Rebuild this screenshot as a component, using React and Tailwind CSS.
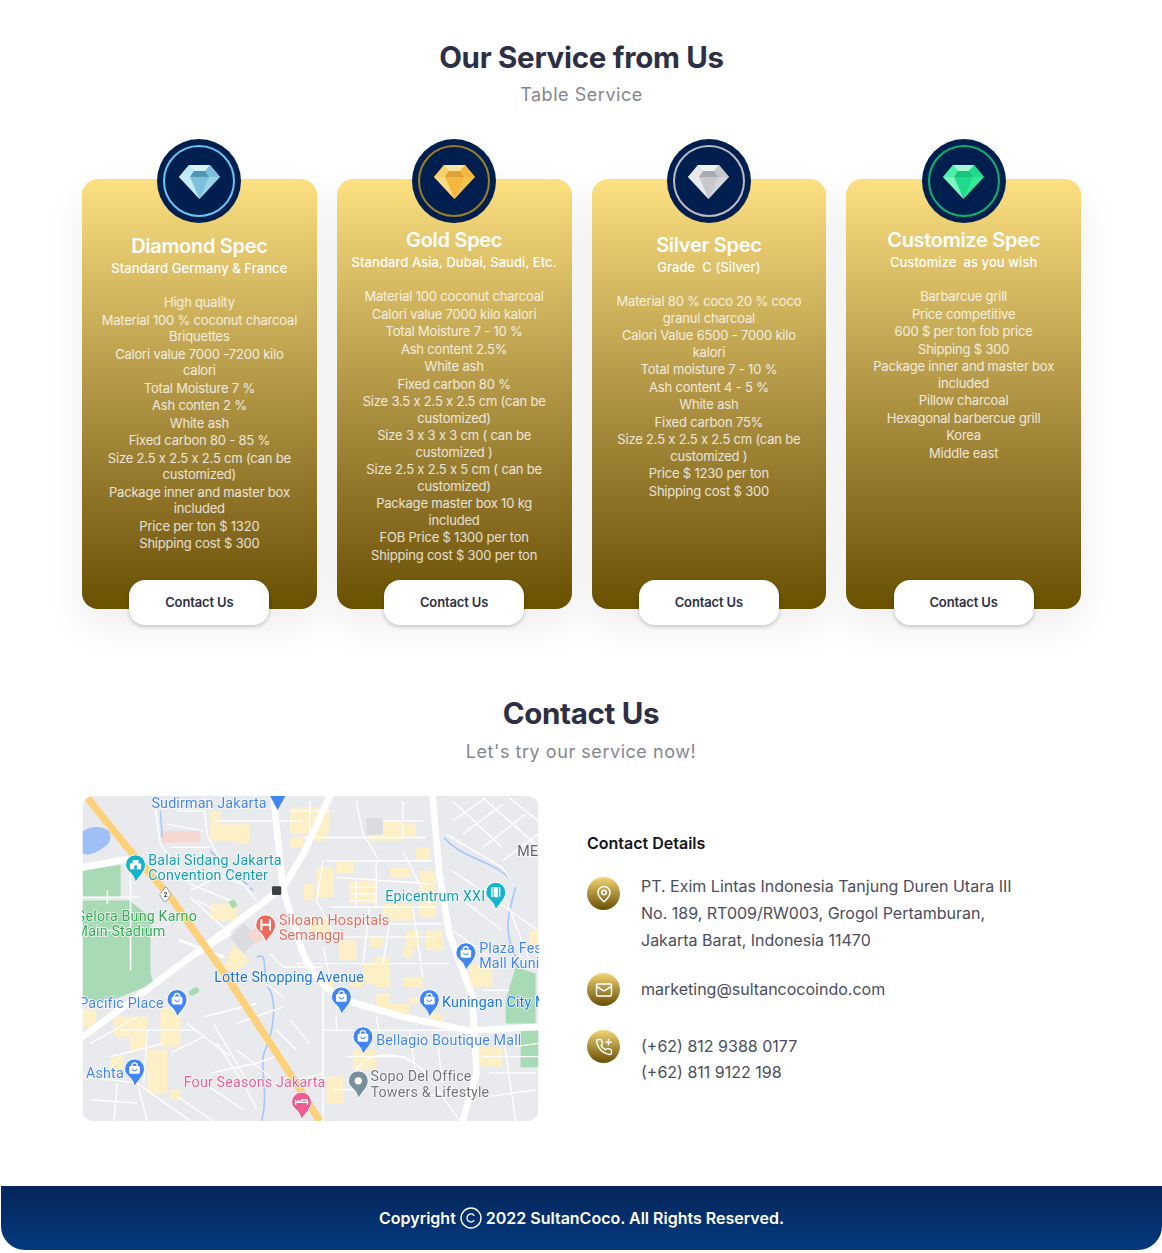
import { MapPin, Mail, Copyright } from "lucide-react"

const sans = "font-['Inter','Liberation_Sans',sans-serif]"

const specs = [
  {
    title: "Diamond Spec",
    sub: "Standard Germany & France",
    top: "pt-[10px]",
    ring: "border-[#6cc4f0]",
    gem: ["#bfe9f7", "#7cc0dc", "#4f97b3", "#9ad6ea", "#d8f3fb"],
    items: [
      "High quality",
      "Material 100 % coconut charcoal Briquettes",
      "Calori value 7000 -7200 kilo calori",
      "Total Moisture 7 %",
      "Ash conten 2 %",
      "White ash",
      "Fixed carbon 80 - 85 %",
      "Size 2.5 x 2.5 x 2.5 cm (can be customized)",
      "Package inner and master box included",
      "Price per ton $ 1320",
      "Shipping cost $ 300",
    ],
  },
  {
    title: "Gold Spec",
    sub: "Standard Asia, Dubai, Saudi, Etc.",
    top: "pt-[4px]",
    ring: "border-[#9a7f2a]",
    gem: ["#fbd06a", "#f4b740", "#dfa03a", "#f8c24f", "#fde3a0"],
    items: [
      "Material 100 coconut charcoal",
      "Calori value 7000 kilo kalori",
      "Total Moisture 7 - 10 %",
      "Ash content 2.5%",
      "White ash",
      "Fixed carbon 80 %",
      "Size 3.5 x 2.5 x 2.5 cm (can be customized)",
      "Size 3 x 3 x 3 cm ( can be customized )",
      "Size 2.5 x 2.5 x 5 cm ( can be customized)",
      "Package master box 10 kg included",
      "FOB Price $ 1300 per ton",
      "Shipping cost $ 300 per ton",
    ],
  },
  {
    title: "Silver Spec",
    sub: "Grade  C (Silver)",
    top: "pt-[9px]",
    ring: "border-[#b9bdc6]",
    gem: ["#e6e7ea", "#c6c8cd", "#a9abb2", "#d4d5d9", "#f2f3f4"],
    items: [
      "Material 80 % coco 20 % coco granul charcoal",
      "Calori Value 6500 - 7000 kilo kalori",
      "Total moisture 7 - 10 %",
      "Ash content 4 - 5 %",
      "White ash",
      "Fixed carbon 75%",
      "Size 2.5 x 2.5 x 2.5 cm (can be customized )",
      "Price $ 1230 per ton",
      "Shipping cost $ 300",
    ],
  },
  {
    title: "Customize Spec",
    sub: "Customize  as you wish",
    top: "pt-[4px]",
    ring: "border-[#10b06f]",
    gem: ["#4cf0a8", "#1fdc8c", "#16c47a", "#36e89b", "#a4f8d2"],
    items: [
      "Barbarcue grill",
      "Price competitive",
      "600 $ per ton fob price",
      "Shipping $ 300",
      "Package inner and master box included",
      "Pillow charcoal",
      "Hexagonal barbercue grill",
      "Korea",
      "Middle east",
    ],
  },
]

function Gem({ colors }) {
  const [top, mid, deep, side, shine] = colors
  return (
    <svg width="41" height="35" viewBox="0 0 41 35" className="blur-[0.4px]">
      <path d="M10 1h21l10 12-20.500 22L0 13z" fill={side} />
      <path d="M10 1h21l-5 6H15z" fill={shine} />
      <path d="M10 1l5 6-4 6H0z" fill={top} />
      <path d="M31 1l-5 6 4 6h11z" fill={mid} />
      <path d="M15 7h11l4 6H11z" fill={deep} />
      <path d="M11 13h19l-9.500 22z" fill={mid} />
      <path d="M0 13h11l9.500 22z" fill={shine} opacity="0.7" />
    </svg>
  )
}

function SpecCard({ spec }) {
  return (
    <div className="flex h-[430px] flex-col items-center rounded-[16px] bg-gradient-to-b from-[#fde081] to-[#6a5000] shadow-[0_16px_40px_rgba(0,0,0,0.07)]">
      <div className="-mt-10 flex h-[84px] w-[84px] shrink-0 items-center justify-center rounded-full bg-[#001f4e]">
        <div className={`flex h-[72px] w-[72px] items-center justify-center rounded-full border-2 ${spec.ring}`}>
          <Gem colors={spec.gem} />
        </div>
      </div>
      <div className={`w-full px-4 text-center text-white ${spec.top}`}>
        <h3 className="text-[20px] leading-[26px] font-semibold tracking-[-0.015em]">{spec.title}</h3>
        <p className="-mx-2 mt-[1px] text-[13px] leading-[17px] font-medium tracking-[0.005em] whitespace-pre-wrap">{spec.sub}</p>
        <div className="mt-[17px] text-[13px] leading-[16.500px] tracking-[-0.015em] text-white/80">
          {spec.items.map((item) => (
            <p key={item} className="mb-[1px]">{item}</p>
          ))}
        </div>
      </div>
      <button className="mt-auto -mb-4 h-[45px] w-[140px] shrink-0 rounded-[16px] bg-white text-[13px] font-semibold tracking-[-0.01em] text-[#2f2f45] shadow-[0_2px_4px_rgba(0,0,0,0.2)]">
        Contact Us
      </button>
    </div>
  )
}

// x/y of every map item are in 3x pixels of the map crop
const yellowBlocks = [
  [420, 100, 120, 50], [660, 50, 120, 80], [740, 230, 50, 90], [720, 100, 50, 50],
  [900, 90, 100, 60], [1050, 240, 50, 140], [1070, 420, 50, 60], [810, 450, 50, 60], [910, 500, 50, 90],
  [1000, 560, 60, 30], [1200, 520, 70, 70], [270, 650, 60, 120], [130, 680, 100, 60], [230, 780, 60, 130],
  [36, 660, 40, 50], [920, 610, 40, 60], [960, 640, 60, 40], [850, 780, 70, 60], [1230, 770, 70, 60],
  [770, 860, 50, 80], [420, 340, 80, 50], [700, 280, 30, 50], [1080, 670, 40, 30], [980, 100, 60, 40],
  [940, 340, 90, 50], [720, 380, 60, 60], [1010, 420, 40, 50], [180, 740, 50, 40], [880, 520, 30, 60],
  [840, 270, 80, 70], [800, 210, 50, 40], [960, 230, 60, 30], [660, 140, 40, 30], [1040, 170, 40, 40],
  [500, 130, 40, 30], [900, 440, 40, 30], [760, 560, 30, 40], [1020, 620, 40, 20], [120, 800, 40, 40],
  [300, 900, 30, 30], [1380, 420, 28, 60], [1000, 470, 30, 30], [840, 560, 40, 30],
]

const thinStreets = [
  "M250 20 L270 160 L360 280 L480 330", "M400 20 L410 130 L440 190 L560 330", "M430 90 H700", "M700 140 H1070",
  "M770 210 H1090", "M760 210 L740 330 L800 440", "M920 210 V350", "M860 270 V350", "M1000 180 L1080 340", "M780 350 H1100",
  "M820 440 H1100", "M900 350 L880 520", "M1030 350 L1060 560", "M680 520 H1140", "M1130 130 L1300 230 L1340 290",
  "M1150 30 L1300 170", "M1240 20 L1400 160", "M1320 20 L1408 90", "M1300 300 L1390 530", "M1150 240 L1408 420",
  "M400 680 L560 640", "M430 700 L540 890", "M500 700 L640 650", "M150 720 H380", "M230 720 L220 880",
  "M36 860 L200 880 L360 994", "M140 880 L130 994", "M420 850 L560 820 L640 790", "M760 600 L760 994", "M760 720 H1200",
  "M860 840 C900 780 1000 780 1060 840 L1170 990", "M40 420 H170", "M360 320 L480 430", "M600 490 L640 530 H760", "M1240 800 H1408",
  "M1300 720 L1340 994", "M500 780 L600 860",
  "M840 290 H920", "M840 310 H920", "M840 330 H920", "M660 60 H780", "M720 30 V140", "M860 30 L880 130 L930 210",
  "M1000 30 V140", "M940 90 L1060 90", "M300 170 H420", "M320 60 H400", "M290 100 L400 120", "M440 250 L540 290",
  "M380 330 L440 360", "M360 300 L420 270", "M800 260 L1090 280", "M820 400 H1120", "M960 400 L940 520", "M760 470 L780 560",
  "M1150 90 L1250 20", "M1180 130 L1300 40", "M1240 170 L1370 70", "M1300 210 L1408 130", "M1170 320 L1300 420",
  "M1150 420 L1260 500", "M1240 600 H1320", "M60 760 L200 680", "M120 800 L280 760", "M300 790 L400 740", "M350 700 L480 800",
  "M440 760 L520 880 L560 960", "M400 880 L520 960", "M60 930 L200 940", "M200 880 L230 994", "M620 720 L680 780", "M660 690 L720 760",
  "M800 660 L800 720", "M920 680 L940 780", "M1020 720 L1040 860", "M1100 720 L1120 880", "M830 800 H1010", "M790 900 H880",
  "M1060 920 L1240 900", "M1260 850 H1400", "M1260 920 L1400 900", "M1340 770 L1408 760", "M640 880 L760 850", "M320 920 L430 994",
  "M640 560 H740", "M560 560 L640 620",
]

const blueWater = ["M560 500 C600 480 570 560 600 600 C620 640 610 720 590 770 C560 820 600 900 575 994", "M270 60 L275 140", "M420 180 L550 300", "M1125 140 C1180 210 1300 210 1340 290 C1320 360 1300 420 1340 500"]

function Pin({ x, y, color, tip = 56, children }) {
  const d = `M${x - 30} ${y}a30 30 0 1 1 60 0c0 22-22 36-30 ${tip - 2}c-8-${tip - 20}-30-${tip - 24}-30-${tip - 2}z`
  return (
    <g>
      <path d={d} fill={color} stroke="#fff" strokeWidth="3" />
      {children}
    </g>
  )
}

function BagPin({ x, y }) {
  return (
    <Pin x={x} y={y} color="#4285f4">
      <rect x={x - 16} y={y - 9} width="32" height="24" rx="5" fill="#fff" />
      <path d={`M${x - 8} ${y - 9}a8 9 0 0 1 16 0`} fill="none" stroke="#fff" strokeWidth="4" />
      <path d={`M${x - 7} ${y}a7 6 0 0 0 14 0`} fill="none" stroke="#4285f4" strokeWidth="3" />
    </Pin>
  )
}

function MapLabel({ x, y, color, anchor = "start", children }) {
  return (
    <text
      x={x}
      y={y}
      fill={color}
      textAnchor={anchor}
      stroke="#fff"
      strokeWidth="4"
      paintOrder="stroke"
      fontSize="43"
      letterSpacing="0.500"
      fontFamily="Roboto, sans-serif"
    >
      {children}
    </text>
  )
}

function MapPicture() {
  return (
    <svg viewBox="36 15 1372 979" className="block h-full w-full blur-[0.4px]">
      <rect x="36" y="15" width="1372" height="979" fill="#e9eaee" />
      {yellowBlocks.map(([x, y, w, h]) => (
        <rect key={`${x}-${y}`} x={x} y={y} width={w} height={h} rx="4" fill="#fdf0c6" />
      ))}
      <path d="M460 530l30-70 50 50-50 40zM420 60h30v40h-30z" fill="#fdf0c6" />
      <rect x="275" y="120" width="115" height="35" fill="#f6d7d2" />
      <rect x="890" y="82" width="50" height="50" fill="#dadce0" />
      <path d="M480 440l40-40 50 40-50 50z" fill="#dadce0" />
      <path d="M530 430l30-20 30 30-30 20z" fill="#f6d7d2" />

      <path d="M36 240l114-18v98H36z" fill="#a8dab5" />
      <path d="M36 330h140l64 50v170l10 30-150 60-64-20z" fill="#a8dab5" />
      <path d="M1340 530l60 20v150h-90v-70z" fill="#a8dab5" />
      <rect x="1355" y="722" width="53" height="110" fill="#a8dab5" />
      <rect x="480" y="328" width="18" height="24" fill="#a8dab5" transform="rotate(-30 489 340)" />
      <rect x="355" y="595" width="32" height="18" rx="8" fill="#a8dab5" transform="rotate(-30 371 604)" />
      <path d="M36 122c20-16 60-20 80 0 10 26-2 40-20 50-20 16-40 22-60 18z" fill="#9fc0f6" />

      {blueWater.map((d) => (
        <path key={d} d={d} fill="none" stroke="#a8c7fa" strokeWidth="5" />
      ))}
      {thinStreets.map((d) => (
        <path key={d} d={d} fill="none" stroke="#fff" strokeWidth="4" />
      ))}
      <path d="M110 300v40M180 240v300M36 320h170" fill="none" stroke="#fff" strokeWidth="5" />

      <g fill="none" stroke="#fff" strokeLinecap="round" strokeLinejoin="round" strokeWidth="20">
        <path d="M610 15 L640 300 L700 490 C740 580 790 620 860 640 L1000 680 L1200 722 L1408 710" />
        <path d="M780 15 L700 190 L640 290 L400 470 L200 620 L36 740" />
        <path d="M1090 15 L1110 250 L1140 430 L1210 620 L1222 850 L1180 994" />
        <path d="M36 230 L170 205" />
        <path d="M330 450 L460 500 M340 520 L480 430" strokeWidth="8" />
      </g>
      <path d="M50 20 L170 170 L300 320 L470 560 L640 820 L750 994" fill="none" stroke="#fdd17a" strokeWidth="22" />

      <path d="M600 15h46l-23 42z" fill="#4285f4" />
      <rect x="606" y="287" width="28" height="26" rx="4" fill="#3c4043" />
      <path d="M268 312l16-22h4l14 22-14 20h-8z" fill="#fff" stroke="#70757a" strokeWidth="2" />
      <text x="286" y="320" fontSize="20" fontWeight="700" fill="#3c4043" textAnchor="middle" fontFamily="Roboto, sans-serif">2</text>

      <Pin x={195} y={222} color="#12b5cb">
        <path d="M178 236v-18h34v18zM186 218v-10h18v10z" fill="#fff" />
        <rect x="191" y="224" width="8" height="12" fill="#12b5cb" />
      </Pin>
      <Pin x={1280} y={305} color="#12b5cb">
        <rect x="1266" y="290" width="28" height="30" rx="3" fill="#fff" />
        <path d="M1272 290v30M1288 290v30" stroke="#12b5cb" strokeWidth="3" />
      </Pin>
      <Pin x={587} y={403} color="#ea6a5c">
        <path d="M574 386v34M600 386v34M574 403h26" stroke="#fff" strokeWidth="6" fill="none" />
      </Pin>
      <Pin x={695} y={937} color="#ee5d8f">
        <path d="M677 930v16M713 946v-8h-36M682 934h10M696 930h16v8h-16z" stroke="#fff" strokeWidth="4" fill="none" />
      </Pin>
      <Pin x={866} y={873} color="#78909c">
        <circle cx="866" cy="873" r="11" fill="#fff" />
      </Pin>
      <BagPin x={320} y={628} />
      <BagPin x={815} y={620} />
      <BagPin x={1080} y={628} />
      <BagPin x={1190} y={487} />
      <BagPin x={880} y={740} />
      <BagPin x={192} y={837} />

      <MapLabel x={243} y={52} color="#4285f4">Sudirman Jakarta</MapLabel>
      <MapLabel x={233} y={223} color="#129eaf">Balai Sidang Jakarta</MapLabel>
      <MapLabel x={233} y={268} color="#129eaf">Convention Center</MapLabel>
      <MapLabel x={380} y={391} color="#34a853" anchor="end">Gelora Bung Karno</MapLabel>
      <MapLabel x={285} y={436} color="#34a853" anchor="end">Main Stadium</MapLabel>
      <MapLabel x={627} y={405} color="#ea6a5c">Siloam Hospitals</MapLabel>
      <MapLabel x={627} y={450} color="#ea6a5c">Semanggi</MapLabel>
      <MapLabel x={947} y={331} color="#129eaf">Epicentrum XXI</MapLabel>
      <MapLabel x={1230} y={488} color="#4285f4">Plaza Festival</MapLabel>
      <MapLabel x={1230} y={534} color="#4285f4">Mall Kuningan</MapLabel>
      <MapLabel x={432} y={575} color="#1a73e8">Lotte Shopping Avenue</MapLabel>
      <MapLabel x={280} y={654} color="#4285f4" anchor="end">Pacific Place</MapLabel>
      <MapLabel x={1118} y={652} color="#1a73e8">Kuningan City Mall</MapLabel>
      <MapLabel x={920} y={765} color="#4285f4">Bellagio Boutique Mall</MapLabel>
      <MapLabel x={46} y={863} color="#4285f4">Ashta</MapLabel>
      <MapLabel x={340} y={892} color="#ee5d8f">Four Seasons Jakarta</MapLabel>
      <MapLabel x={903} y={875} color="#70757a">Sopo Del Office</MapLabel>
      <MapLabel x={903} y={921} color="#70757a">Towers &amp; Lifestyle</MapLabel>
      <MapLabel x={1345} y={195} color="#5f6368">ME</MapLabel>
    </svg>
  )
}

function PhonePlus() {
  return (
    <svg width="18" height="18" viewBox="0 0 24 24" fill="none" stroke="currentColor" strokeWidth="2" strokeLinecap="round" strokeLinejoin="round">
      <path d="M22 16.920v3a2 2 0 0 1-2.180 2 19.790 19.790 0 0 1-8.630-3.070 19.500 19.500 0 0 1-6-6 19.790 19.790 0 0 1-3.070-8.670A2 2 0 0 1 4.110 2h3a2 2 0 0 1 2 1.720 12.840 12.840 0 0 0 .7 2.810 2 2 0 0 1-.45 2.110L8.090 9.910a16 16 0 0 0 6 6l1.270-1.270a2 2 0 0 1 2.110-.45 12.840 12.840 0 0 0 2.810.7A2 2 0 0 1 22 16.92z" />
      <path d="M18 2v7M14.500 5.500h7" />
    </svg>
  )
}

function ContactRow({ icon, className = "", children }) {
  return (
    <div className={`flex items-start gap-[21px] ${className}`}>
      <div className="flex h-[33px] w-[33px] shrink-0 items-center justify-center rounded-full bg-gradient-to-b from-[#f4d673] to-[#6a5000] text-white">
        {icon}
      </div>
      <div className="text-[16px] text-[#4a4d5e]">{children}</div>
    </div>
  )
}

export default function App() {
  return (
    <div className={`w-[1162px] bg-white pb-[3px] ${sans}`}>
      <section className="pr-[81px] pl-[82px] pt-[38px]">
        <h2 className="text-center text-[29.500px] leading-[38px] font-bold tracking-[-0.01em] text-[#2d2f45]">Our Service from Us</h2>
        <p className="mt-[5px] text-center text-[18px] leading-[28px] tracking-[0.03em] text-[#85868f]">Table Service</p>
        <div className="mt-[70px] grid grid-cols-4 gap-[20px]">
          {specs.map((spec) => (
            <SpecCard key={spec.title} spec={spec} />
          ))}
        </div>
      </section>

      <section className="px-[82px] pt-[85px]">
        <h2 className="text-center text-[29.500px] leading-[38px] font-bold tracking-[-0.01em] text-[#2d2f45]">Contact Us</h2>
        <p className="mt-[6px] text-center text-[18px] leading-[28px] tracking-[0.03em] text-[#85868f]">Let's try our service now!</p>
        <div className="mt-[30px] flex">
          <div className="h-[325px] w-[457px] shrink-0 overflow-hidden rounded-[12px]">
            <MapPicture />
          </div>
          <div className="ml-[48px] pt-[37px]">
            <h4 className="text-[16px] leading-[20px] font-semibold text-[#14141c]">Contact Details</h4>
            <ContactRow className="mt-[24px]" icon={<MapPin size={18} strokeWidth={2} />}>
              <p className="-mt-[4px] leading-[27px]">PT. Exim Lintas Indonesia Tanjung Duren Utara III<br />No. 189, RT009/RW003, Grogol Pertamburan,<br />Jakarta Barat, Indonesia 11470</p>
            </ContactRow>
            <ContactRow className="mt-[19px]" icon={<Mail size={18} strokeWidth={2} />}>
              <p className="leading-[33px]">marketing@sultancocoindo.com</p>
            </ContactRow>
            <ContactRow className="mt-[24px]" icon={<PhonePlus />}>
              <p className="pt-[4px] leading-[25.500px]">(+62) 812 9388 0177<br />(+62) 811 9122 198</p>
            </ContactRow>
          </div>
        </div>
      </section>

      <footer className="mt-[65px] ml-[1px] flex h-[64px] items-center justify-center rounded-b-[24px] bg-gradient-to-b from-[#04265b] to-[#05397e] text-[16px] font-semibold text-white">
        <span>Copyright</span>
        <Copyright size={24} strokeWidth={1.4} className="mx-[3px]" />
        <span>2022 SultanCoco. All Rights Reserved.</span>
      </footer>
    </div>
  )
}
